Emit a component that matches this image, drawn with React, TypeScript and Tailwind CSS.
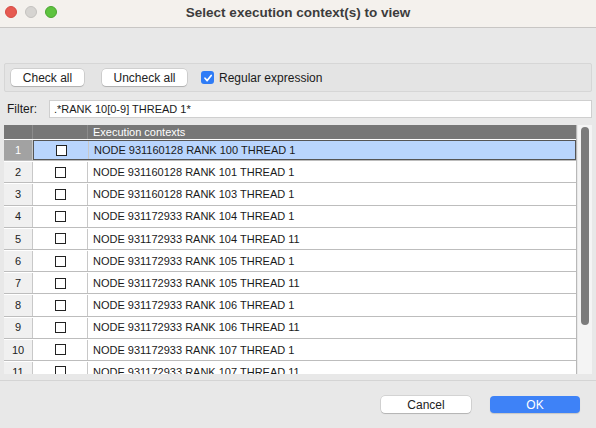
import React from 'react'

// rows shown in the list (last one is cut by the bottom of the table)
const rows = [
  'NODE 931160128 RANK 100 THREAD 1',
  'NODE 931160128 RANK 101 THREAD 1',
  'NODE 931160128 RANK 103 THREAD 1',
  'NODE 931172933 RANK 104 THREAD 1',
  'NODE 931172933 RANK 104 THREAD 11',
  'NODE 931172933 RANK 105 THREAD 1',
  'NODE 931172933 RANK 105 THREAD 11',
  'NODE 931172933 RANK 106 THREAD 1',
  'NODE 931172933 RANK 106 THREAD 11',
  'NODE 931172933 RANK 107 THREAD 1',
  'NODE 931172933 RANK 107 THREAD 11',
]

function MacButton({ label, className = '' }: { label: string; className?: string }) {
  return (
    <button
      className={`h-[17px] rounded-[4px] bg-white text-[12px] leading-none text-[#222] shadow-[0_0_0_0.5px_rgba(0,0,0,0.18),0_1px_1px_rgba(0,0,0,0.15)] ${className}`}
    >
      {label}
    </button>
  )
}

export default function App() {
  return (
    <div
      className="flex h-[428px] w-[596px] flex-col overflow-hidden bg-[#e8e8e8] text-[#1a1a1a]"
      style={{ fontFamily: '"Liberation Sans", Arial, sans-serif' }}
    >
      {/* Title bar */}
      <div className="relative flex h-[28px] shrink-0 items-center justify-center border-b border-[#c8c6c4] bg-[#f4f1ed]">
        <div className="absolute left-[5px] top-[6px] flex gap-[8px]">
          <span className="h-[12px] w-[12px] rounded-full border border-[#d64b43] bg-[#e65a51]" />
          <span className="h-[12px] w-[12px] rounded-full border border-[#c4c2bf] bg-[#d6d4d1]" />
          <span className="h-[12px] w-[12px] rounded-full border border-[#4aa530] bg-[#5ec33f]" />
        </div>
        <span className="text-[13.5px] font-bold text-[#3c3c3c]">Select execution context(s) to view</span>
      </div>

      {/* Toolbar group */}
      <div className="mx-[4px] mt-[35px] flex h-[29px] items-center rounded-[2px] border border-[#d6d6d6] bg-[#e4e4e4] pl-[6px]">
        <MacButton label="Check all" className="w-[73px]" />
        <MacButton label="Uncheck all" className="ml-[18px] w-[85px]" />
        <span className="ml-[14px] flex h-[13px] w-[13px] items-center justify-center rounded-[3px] bg-[#2f7cf6]">
          <svg width="10" height="10" viewBox="0 0 10 10">
            <path d="M2 5.2 L4.2 7.6 L8.2 2.4" fill="none" stroke="white" strokeWidth="1.7" strokeLinecap="round" strokeLinejoin="round" />
          </svg>
        </span>
        <span className="ml-[5px] text-[12px]">Regular expression</span>
      </div>

      {/* Filter */}
      <div className="mt-[8px] flex h-[18px] items-center pl-[7px] pr-[4px]">
        <span className="w-[42px] text-[12px]">Filter:</span>
        <div className="flex h-[18px] flex-1 items-center border border-[#cfcfcf] bg-white pl-[4px] text-[11px]">
          .*RANK 10[0-9] THREAD 1*
        </div>
      </div>

      {/* Table + scrollbar */}
      <div className="ml-[4px] mt-[7px] flex h-[249px] pr-[4px]">
        <div className="flex w-[573px] flex-col overflow-hidden border-r border-[#b8b8b8] bg-white text-[11px]">
          <div className="flex h-[14px] shrink-0 bg-[#777777] text-white">
            <div className="w-[29px] border-r border-[#8c8c8c]" />
            <div className="w-[55px] border-r border-[#8c8c8c]" />
            <div className="flex-1 pl-[5px] leading-[14px]">Execution contexts</div>
          </div>
          {rows.map((r, i) => {
            const sel = i === 0
            return (
              <div key={r} className="flex h-[22.2px] shrink-0 border-b border-[#bdbdbd] pt-[1px]">
                <div
                  className={`flex w-[29px] items-center justify-center border-r border-[#c8c8c8] ${sel ? 'bg-[#a2a2a2] text-white' : 'bg-[#f0f0f0] text-[#222]'}`}
                >
                  {i + 1}
                </div>
                <div
                  className={`flex flex-1 items-center ${sel ? 'border border-[#555] bg-[#b9d5fd]' : 'bg-white'}`}
                >
                  <div className="flex w-[55px] items-center justify-center self-stretch border-r border-[#c8c8c8]">
                    <span className="h-[11px] w-[11px] border border-[#222] bg-white" />
                  </div>
                  <span className="pl-[5px]">{r}</span>
                </div>
              </div>
            )
          })}
        </div>
        <div className="ml-[1px] flex w-[14px] justify-center bg-[#f4f4f4] pt-[2px]">
          <div className="h-[198px] w-[8px] rounded-full bg-[#7b7b7b]" />
        </div>
      </div>

      {/* Bottom buttons */}
      <div className="mt-[6px] flex flex-1 items-start justify-end border-t border-[#d4d4d4] pr-[16px] pt-[15px]">
        <MacButton label="Cancel" className="w-[90px]" />
        <button className="ml-[19px] h-[17px] w-[90px] rounded-[4px] bg-[#3e82f7] text-[12px] leading-none text-white shadow-[0_1px_1px_rgba(0,0,0,0.15)]">
          OK
        </button>
      </div>
    </div>
  )
}
